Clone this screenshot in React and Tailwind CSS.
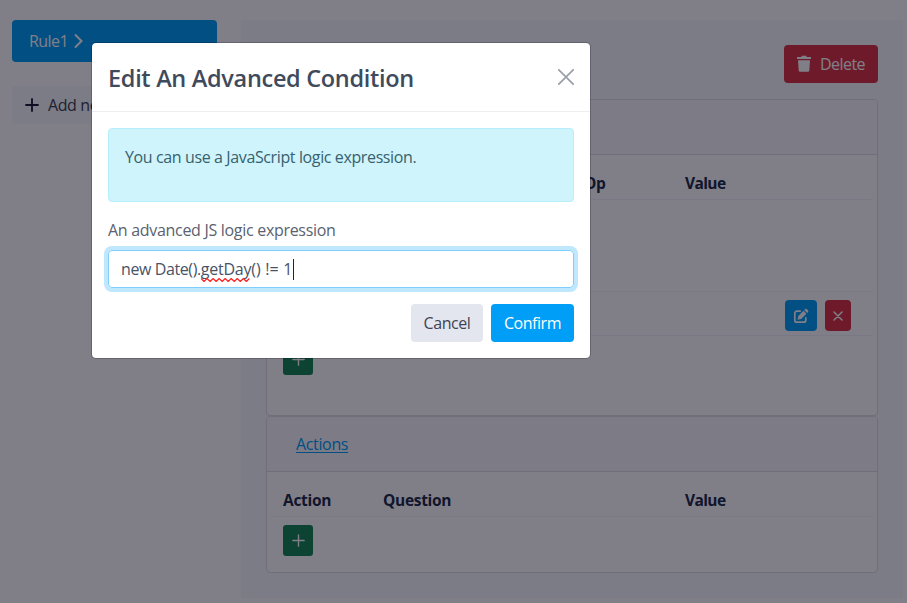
import React from "react";

function Plus({ size = 16, stroke = 1.6 }) {
  return (
    <svg width={size} height={size} viewBox="0 0 16 16" fill="none" stroke="currentColor" strokeWidth={stroke} strokeLinecap="round">
      <path d="M8 2v12M2 8h12" />
    </svg>
  );
}

function Trash() {
  return (
    <svg width="16" height="18" viewBox="0 0 16 18" fill="currentColor">
      <path d="M5.5 0.8h5v1.2H15v2H1V2h4.500zM2 5.200h12l-.7 10.200a1.500 1.500 0 0 1-1.500 1.400H4.200a1.500 1.500 0 0 1-1.500-1.400z" />
    </svg>
  );
}

function Edit() {
  return (
    <svg width="16" height="16" viewBox="0 0 16 16" fill="none" stroke="currentColor">
      <path d="M7.200 3.200H3.800a2 2 0 0 0-2 2v7a2 2 0 0 0 2 2h7a2 2 0 0 0 2-2V9.800" strokeWidth="1.700" strokeLinecap="round" />
      <path d="M4.500 11.700l.8-3.700 5.200-5.200 2.900 2.900-5.200 5.200zM11.200 2.100l.8-.8a1.400 1.400 0 0 1 2 0l.9.9a1.400 1.400 0 0 1 0 2l-.8.8z" fill="currentColor" stroke="none" />
    </svg>
  );
}

function Sidebar() {
  return (
    <aside className="w-[205px] shrink-0">
      <div className="flex h-[42px] items-center rounded bg-[#009ef7] pl-[17px] text-white">
        <span className="tracking-[-0.55px]">Rule1</span>
        <svg className="ml-[6px]" width="10" height="16" viewBox="0 0 10 16" fill="none" stroke="currentColor" strokeWidth="2" strokeLinecap="round">
          <path d="M1.500 2l6 6-6 6" />
        </svg>
      </div>
      <div className="mt-6 flex h-[38px] items-center rounded bg-[#f6f8fd] pl-3 text-[#3f4254]">
        <span className="text-[#181c32]"><Plus stroke={1.800} /></span>
        <span className="ml-[8px] tracking-[-0.4px]">Add new rule</span>
      </div>
    </aside>
  );
}

function HeadRow({ first, second, third }) {
  return (
    <div className="flex h-[45px] items-center border-b border-[#eff2f8] pl-3 pt-[12px] text-[15.5px] font-bold tracking-[-0.3px] text-[#212d4a]">
      <span className="w-[100px]">{first}</span>
      <span className="w-[201px]">{second}</span>
      <span className="w-[101px]">{third}</span>
      <span className="tracking-[-0.6px]">Value</span>
    </div>
  );
}

function AddButton() {
  return (
    <button className="ml-3 mt-2 flex h-[31px] w-[30px] items-center justify-center rounded-[3px] bg-[#198754] text-white">
      <Plus size={15} stroke={1.500} />
    </button>
  );
}

function Card({ title, height, children }) {
  return (
    <section className={"overflow-hidden rounded border border-[#dedee3] bg-white " + height}>
      <header className="flex h-[55px] items-center border-b border-[#dedee3] bg-[#f8f8fd] pl-[29px] text-[#009ef7]">
        <span className="tracking-[-0.35px] underline underline-offset-2">{title}</span>
      </header>
      <div className="px-1">{children}</div>
    </section>
  );
}

function RulePanel() {
  return (
    <main className="ml-6 h-[578px] w-[662px] shrink-0 bg-[#f5f8fd] px-[25px] pt-[25px]">
      <div className="flex justify-end">
        <button className="flex h-[38px] w-[94px] items-center rounded bg-[#dc3545] pl-3 text-white">
          <Trash />
          <span className="ml-[8px] tracking-[-0.55px]">Delete</span>
        </button>
      </div>
      <div className="mt-4">
        <Card title="Conditions" height="h-[317px]">
          <HeadRow first="Type" second="Question" third="Op" />
          <div className="h-[92px] border-b border-[#eff2f8]" />
          <div className="flex h-[44px] items-start justify-end gap-2 border-b border-[#eff2f8] pr-[22px] pt-2 text-white">
            <button className="flex h-[31px] w-8 items-center justify-center rounded bg-[#009ef7]"><Edit /></button>
            <button className="flex h-[31px] w-[26px] items-center justify-center rounded bg-[#dc3545]">
              <svg width="10" height="10" viewBox="0 0 10 10" fill="none" stroke="currentColor" strokeWidth="1.500" strokeLinecap="round">
                <path d="M1 1l8 8M9 1L1 9" />
              </svg>
            </button>
          </div>
          <AddButton />
        </Card>
        <Card title="Actions" height="h-[157px]">
          <HeadRow first="Action" second="Question" third="" />
          <AddButton />
        </Card>
      </div>
    </main>
  );
}

function Dialog() {
  return (
    <div className="absolute left-[91px] top-[42px] h-[317px] w-[500px] rounded-[5px] border border-[#00000f]/20 bg-white bg-clip-padding">
      <div className="flex h-[69px] items-center justify-between border-b border-[#eceef0] px-4 pb-px">
        <h2 className="whitespace-nowrap pt-0.5 text-[23.5px] font-semibold leading-8 tracking-[-0.31px] text-[#3f4a5c]">Edit An Advanced Condition</h2>
        <svg width="16" height="16" viewBox="0 0 16 16" fill="none" stroke="#9a9eaa" strokeWidth="1.700" strokeLinecap="round">
          <path d="M.8.8l14.400 14.400M15.200.8L.8 15.200" />
        </svg>
      </div>
      <div className="px-4 pt-4">
        <div className="h-[74px] rounded border border-[#b6effb] bg-[#cff4fc] px-4 pt-4 text-[#37616e]">
          <span className="tracking-[-0.38px]">You can use a JavaScript logic expression.</span>
        </div>
        <div className="mt-4 h-6 text-[#5a626f]">
          <span className="tracking-[-0.3px]">An advanced JS logic expression</span>
        </div>
        <div className="mt-2 flex h-[38px] items-center rounded border border-[#80cffb] px-3 text-[#485365] ring-4 ring-[#bfe7fd]">
          <span className="tracking-[-0.4px]">new Date().</span>
          <span className="relative tracking-[-0.25px]">
            getDay
            <svg className="absolute bottom-[-1px] left-0 w-full" height="4" viewBox="0 0 50 4" preserveAspectRatio="none" fill="none" stroke="#ff2020" strokeWidth="1.200">
              <path d="M0 .5l3 3 3-3 3 3 3-3 3 3 3-3 3 3 3-3 3 3 3-3 3 3 3-3 3 3 3-3 3 3 3-3" />
            </svg>
          </span>
          <span className="whitespace-pre tracking-[0.15px]">() != 1</span>
          <span className="h-[21px] w-px bg-[#20252b]" />
        </div>
        <div className="mt-4 flex justify-end gap-2">
          <button className="h-[38px] w-[72px] rounded bg-[#e4e6ef] text-[#3f4254]"><span className="tracking-[-0.45px]">Cancel</span></button>
          <button className="h-[38px] w-[83px] rounded bg-[#009ef7] text-white"><span className="tracking-[-0.45px]">Confirm</span></button>
        </div>
      </div>
    </div>
  );
}

export default function App() {
  return (
    <div className="relative h-[603px] w-[907px] overflow-hidden bg-white font-['Open_Sans','Noto_Sans',sans-serif] text-[16px] leading-6">
      <div className="flex pl-3 pt-5">
        <Sidebar />
        <RulePanel />
      </div>
      <div className="absolute inset-0 bg-[#01000f]/50" />
      <Dialog />
    </div>
  );
}
